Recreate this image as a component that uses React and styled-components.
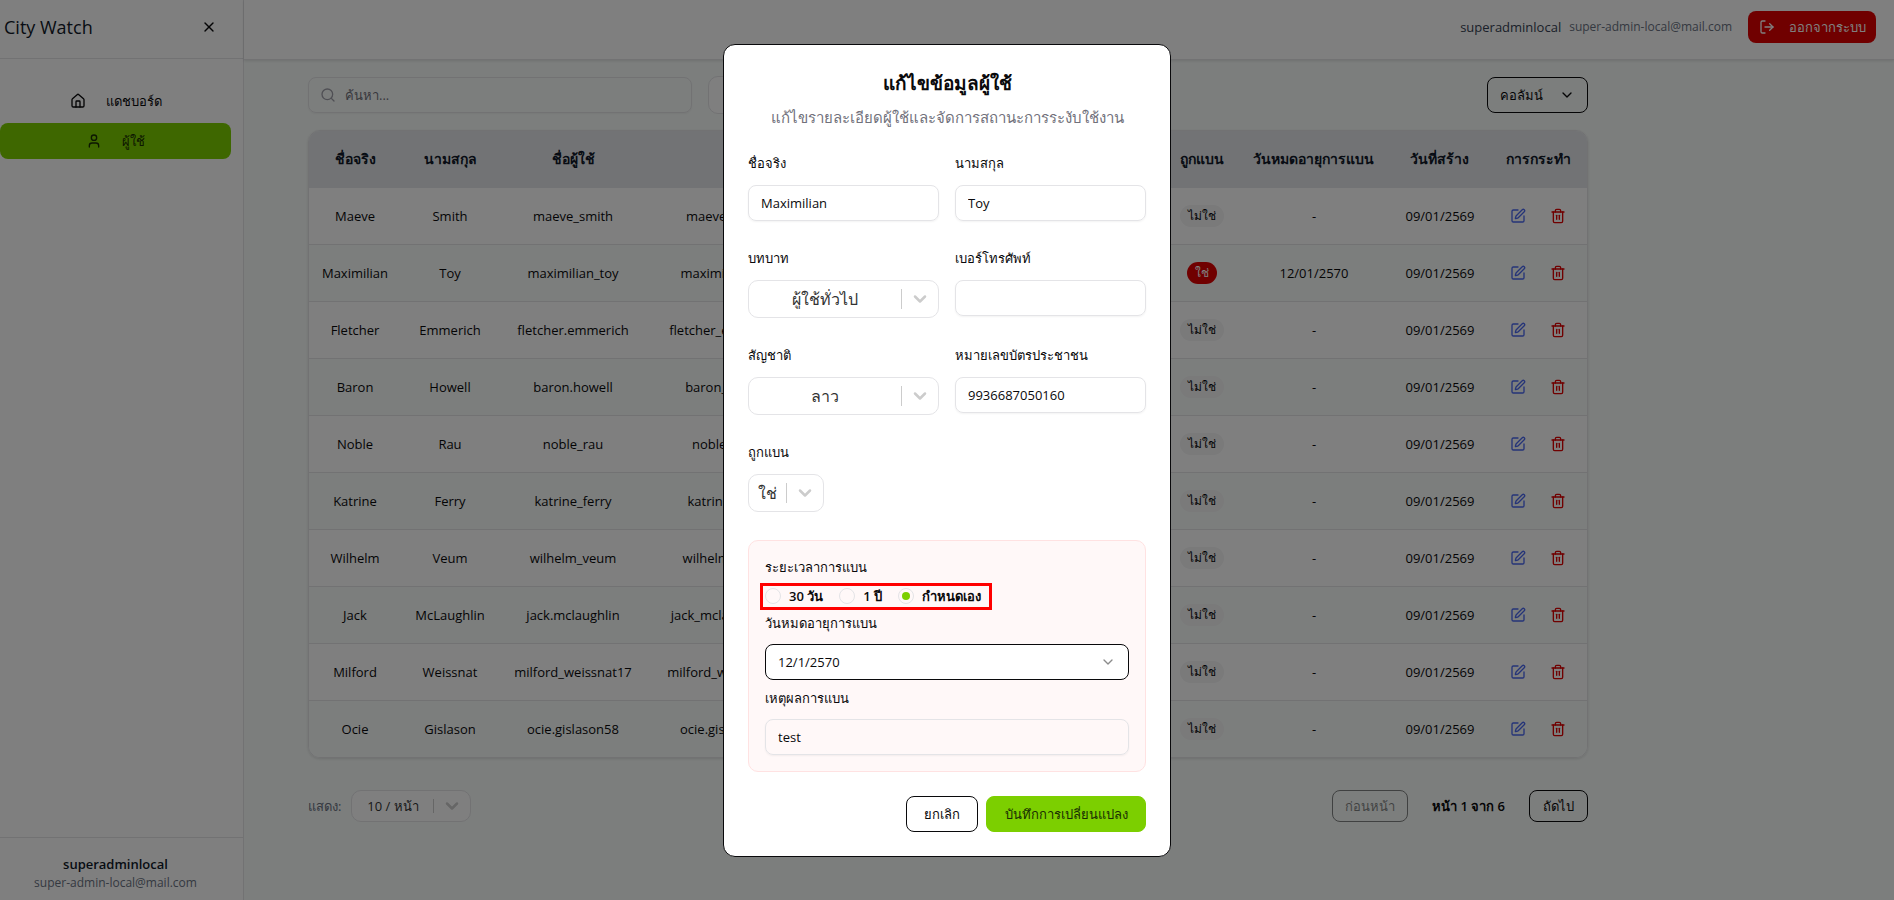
import React from "react";
import styled, { createGlobalStyle, css } from "styled-components";
import {
  ChevronDown,
  House,
  LogOut,
  Search,
  SquarePen,
  Trash2,
  User,
  X,
} from "lucide-react";

const colors = {
  primary: "#7ccf00",
  onPrimary: "#192e03",
  danger: "#e00000",
  ink: "#09090b",
  heading: "#101828",
  muted: "#71717b",
  border: "#e4e4e7",
  page: "#f9fdfb",
};

const users = [
  ["Maeve", "Smith", "maeve_smith", "maeve_smith@gmail.com"],
  ["Maximilian", "Toy", "maximilian_toy", "maximilian_toy@gmail.com", "12/01/2570"],
  ["Fletcher", "Emmerich", "fletcher.emmerich", "fletcher_emmerich@gmail.com"],
  ["Baron", "Howell", "baron.howell", "baron_howell@gmail.com"],
  ["Noble", "Rau", "noble_rau", "noble_rau1@gmail.com"],
  ["Katrine", "Ferry", "katrine_ferry", "katrine_ferry@gmail.com"],
  ["Wilhelm", "Veum", "wilhelm_veum", "wilhelm_veum@gmail.com"],
  ["Jack", "McLaughlin", "jack.mclaughlin", "jack_mclaughlin22@gmail.com"],
  ["Milford", "Weissnat", "milford_weissnat17", "milford_weissnat17@gmail.com"],
  ["Ocie", "Gislason", "ocie.gislason58", "ocie.gislason58@gmail.com"],
];

const columns = [
  { title: "ชื่อจริง", width: 92 },
  { title: "นามสกุล", width: 98 },
  { title: "ชื่อผู้ใช้", width: 148 },
  { title: "อีเมล", width: 232 },
  { title: "", width: 286 },
  { title: "ถูกแบน", width: 73 },
  { title: "วันหมดอายุการแบน", width: 152 },
  { title: "วันที่สร้าง", width: 100 },
  { title: "การกระทำ", width: 97 },
];

const GlobalStyle = createGlobalStyle`
  *, *::before, *::after {
    box-sizing: border-box;
  }

  body {
    margin: 0;
    background: ${colors.page};
    color: ${colors.ink};
    font-family: "Open Sans", "Noto Sans", sans-serif;
    font-size: 13px;
    line-height: 20px;
  }

  button, input, select {
    font: inherit;
    color: inherit;
  }
`;

const Shell = styled.div`
  display: flex;
  min-height: 100vh;
`;

const Sidebar = styled.aside`
  display: flex;
  flex-direction: column;
  flex: 0 0 244px;
  background: #fff;
  border-right: 1px solid ${colors.border};
`;

const SidebarHeader = styled.div`
  display: flex;
  align-items: center;
  justify-content: space-between;
  height: 59px;
  padding: 4px 26px 8px 4px;
  border-bottom: 1px solid ${colors.border};
`;

const Brand = styled.h1`
  margin: 0;
  font-size: 18px;
  font-weight: 500;
  line-height: 28px;
  color: ${colors.heading};
`;

const IconButton = styled.button`
  display: inline-flex;
  align-items: center;
  justify-content: center;
  width: ${(p) => p.$size || 32}px;
  height: ${(p) => p.$size || 32}px;
  padding: 0;
  border: 0;
  background: none;
  color: ${(p) => p.$color || colors.ink};
`;

const Nav = styled.nav`
  display: flex;
  flex-direction: column;
  gap: 4px;
  flex: 1;
  padding: 24px 12px 24px 0;
`;

const NavLink = styled.a`
  display: flex;
  align-items: center;
  justify-content: center;
  gap: 20px;
  height: 36px;
  border-radius: 8px;
  font-weight: 500;
  text-decoration: none;
  color: ${(p) => (p.$active ? colors.onPrimary : colors.ink)};
  background: ${(p) => (p.$active ? colors.primary : "transparent")};
`;

const SidebarFooter = styled.div`
  padding: 16px 12px 8px 0;
  border-top: 1px solid ${colors.border};
  text-align: center;
`;

const UserName = styled.div`
  font-weight: 600;
  color: ${colors.heading};
`;

const UserEmail = styled.div`
  font-size: 12px;
  line-height: 18px;
  color: #6a7282;
`;

const Main = styled.div`
  flex: 1;
  min-width: 0;
`;

const TopBar = styled.header`
  display: flex;
  align-items: center;
  justify-content: flex-end;
  height: 60px;
  padding: 0 18px 6px;
  background: #fff;
  border-bottom: 1px solid ${colors.border};
  box-shadow: 0 1px 3px rgba(0, 0, 0, 0.12);
`;

const TopBarName = styled.span`
  margin-right: 8px;
  color: #364153;
`;

const LogoutButton = styled.button`
  display: flex;
  align-items: center;
  justify-content: center;
  gap: 14px;
  height: 32px;
  min-width: 128px;
  margin-left: 16px;
  padding: 0 8px;
  border: 0;
  border-radius: 8px;
  background: ${colors.danger};
  color: #fff;
  font-weight: 500;
`;

const Content = styled.main`
  display: flex;
  flex-direction: column;
  max-width: 1408px;
  padding: 16px 64px;
`;

const Toolbar = styled.div`
  display: flex;
  align-items: center;
  gap: 16px;
  margin-bottom: 16px;
`;

const ToolbarEnd = styled.div`
  margin-left: auto;
`;

const SearchBox = styled.label`
  display: flex;
  align-items: center;
  gap: 9px;
  width: 384px;
  height: 36px;
  padding: 0 11px;
  border: 1px solid ${colors.border};
  border-radius: 8px;
  box-shadow: 0 1px 2px rgba(0, 0, 0, 0.05);
  color: #9f9fa9;
`;

const SearchInput = styled.input`
  flex: 1;
  min-width: 0;
  padding: 0;
  border: 0;
  outline: 0;
  background: none;

  &::placeholder {
    color: ${colors.muted};
  }
`;

const Button = styled.button`
  display: inline-flex;
  align-items: center;
  justify-content: center;
  gap: 16px;
  height: ${(p) => p.$height || 36}px;
  min-width: ${(p) => p.$minWidth || 0}px;
  padding: 0 8px;
  border: 1px solid ${colors.ink};
  border-radius: 8px;
  background: transparent;
  font-weight: 500;

  &:disabled {
    opacity: 0.5;
  }

  ${(p) =>
    p.$primary &&
    css`
      border-color: ${colors.primary};
      background: ${colors.primary};
      color: ${colors.onPrimary};
    `}
`;

const SelectBox = styled.div`
  display: flex;
  align-items: center;
  width: ${(p) => p.$width || "100%"};
  height: ${(p) => p.$height || 38}px;
  border: 1px solid ${colors.border};
  border-radius: 10px;
  background: #fff;
  color: #ccc;

  svg {
    flex: none;
    margin: 0 8px;
  }
`;

const NativeSelect = styled.select`
  flex: 1;
  align-self: stretch;
  min-width: 0;
  padding: 0;
  border: 0;
  border-radius: 10px;
  outline: 0;
  appearance: none;
  background: none;
  color: #333;
  font-size: ${(p) => p.$fontSize || 16}px;
  text-align: center;
  text-align-last: center;
`;

const Divider = styled.span`
  align-self: stretch;
  width: 1px;
  margin: 8px 0;
  background: #ccc;
`;

const TableCard = styled.div`
  overflow: hidden;
  border: 1px solid ${colors.border};
  border-radius: 12px;
  box-shadow: 0 1px 3px rgba(0, 0, 0, 0.12);
`;

const Table = styled.table`
  width: 100%;
  table-layout: fixed;
  border-spacing: 0;
  text-align: center;
`;

const HeadCell = styled.th`
  height: 57px;
  padding: 0 0 2px;
  background: #e5e7eb;
  color: ${colors.heading};
  font-size: 14px;
  font-weight: 700;
  white-space: nowrap;
`;

const Row = styled.tr`
  background: ${(p) => (p.$even ? colors.page : "#fff")};

  &:not(:last-child) td {
    border-bottom: 1px solid ${colors.border};
    height: 57px;
  }
`;

const Cell = styled.td`
  height: 56px;
  padding: 0;
  white-space: nowrap;
`;

const Badge = styled.span`
  display: inline-block;
  padding: 0 8px;
  border-radius: 12px;
  font-size: 12px;
  line-height: 22px;
  background: ${(p) => (p.$banned ? colors.danger : "#f4f4f5")};
  color: ${(p) => (p.$banned ? "#fff" : colors.ink)};
`;

const Actions = styled.div`
  display: flex;
  justify-content: center;
  gap: 8px;
`;

const Pagination = styled.div`
  display: flex;
  align-items: center;
  justify-content: space-between;
  margin-top: 32px;
`;

const PageSize = styled.label`
  display: flex;
  align-items: center;
  gap: 10px;
  color: #6a7282;
  white-space: nowrap;
`;

const Pager = styled.div`
  display: flex;
  align-items: center;
  gap: 24px;
  font-weight: 600;
`;

const Overlay = styled.div`
  position: fixed;
  inset: 0;
  display: grid;
  place-items: center;
  background: rgba(0, 0, 0, 0.5);
`;

const Dialog = styled.form`
  width: 448px;
  max-width: 100%;
  padding: 24px;
  border: 1px solid ${colors.ink};
  border-radius: 12px;
  background: #fff;
`;

const DialogTitle = styled.h2`
  margin: 0;
  font-size: 19px;
  font-weight: 600;
  line-height: 28px;
  text-align: center;
`;

const DialogHint = styled.p`
  margin: 8px 0 24px;
  font-size: 15px;
  line-height: 24px;
  text-align: center;
  color: ${colors.muted};
`;

const FieldGrid = styled.div`
  display: grid;
  grid-template-columns: 1fr 1fr;
  gap: 27px 16px;
`;

const Field = styled.div`
  display: flex;
  flex-direction: column;
  gap: ${(p) => (p.$compact ? 11 : 12)}px;
`;

const Label = styled.label`
  font-weight: 500;
  line-height: 20px;
`;

const TextInput = styled.input`
  width: 100%;
  height: 36px;
  padding: 0 12px;
  border: 1px solid ${colors.border};
  border-radius: 8px;
  outline: 0;
  background: transparent;
  box-shadow: 0 1px 2px rgba(0, 0, 0, 0.05);
`;

const BanPanel = styled.div`
  display: flex;
  flex-direction: column;
  gap: 8px;
  margin: 28px 0 24px;
  padding: 16px;
  border: 1px solid #ffe2e2;
  border-radius: 10px;
  background: #fff8f8;
`;

const RadioGroup = styled.div`
  display: flex;
  align-self: flex-start;
  gap: 16px;
  padding-right: 6px;
  outline: 3px solid #f00;
  outline-offset: 2px;
`;

const RadioLabel = styled.label`
  display: flex;
  align-items: center;
  gap: 8px;
  font-weight: 600;
  line-height: 17px;
`;

const Radio = styled.input`
  display: grid;
  place-items: center;
  width: 16px;
  height: 16px;
  margin: 0;
  border: 1px solid ${colors.border};
  border-radius: 50%;
  appearance: none;

  &:checked::before {
    width: 8px;
    height: 8px;
    border-radius: 50%;
    background: ${colors.primary};
    content: "";
  }
`;

const DateButton = styled.button`
  display: flex;
  align-items: center;
  justify-content: space-between;
  height: 36px;
  padding: 0 12px;
  border: 1px solid ${colors.ink};
  border-radius: 8px;
  background: #fff;

  svg {
    color: #8b8b8b;
  }
`;

const DialogActions = styled.div`
  display: flex;
  justify-content: flex-end;
  gap: 8px;
`;

const Select = ({ id, value, width, height, fontSize }) => (
  <SelectBox $width={width} $height={height}>
    <NativeSelect id={id} $fontSize={fontSize} aria-label={value}>
      <option>{value}</option>
    </NativeSelect>
    <Divider />
    <ChevronDown size={20} strokeWidth={3} />
  </SelectBox>
);

const TextField = ({ id, label, value, compact }) => (
  <Field $compact={compact}>
    <Label htmlFor={id}>{label}</Label>
    <TextInput id={id} defaultValue={value} />
  </Field>
);

const SelectField = ({ id, label, value, width }) => (
  <Field>
    <Label htmlFor={id}>{label}</Label>
    <Select id={id} value={value} width={width} />
  </Field>
);

const UserTable = () => (
  <TableCard>
    <Table>
      <colgroup>
        {columns.map((column, i) => (
          <col key={i} style={{ width: `${(column.width / 1278) * 100}%` }} />
        ))}
      </colgroup>
      <thead>
        <tr>
          {columns.map((column, i) => (
            <HeadCell key={i}>{column.title}</HeadCell>
          ))}
        </tr>
      </thead>
      <tbody>
        {users.map(([first, last, username, email, banUntil], i) => (
          <Row key={username} $even={i % 2 === 1}>
            <Cell>{first}</Cell>
            <Cell>{last}</Cell>
            <Cell>{username}</Cell>
            <Cell>{email}</Cell>
            <Cell />
            <Cell>
              <Badge $banned={!!banUntil}>{banUntil ? "ใช่" : "ไม่ใช่"}</Badge>
            </Cell>
            <Cell>{banUntil || "-"}</Cell>
            <Cell>09/01/2569</Cell>
            <Cell>
              <Actions>
                <IconButton $color="#4a68f0" aria-label="แก้ไข">
                  <SquarePen size={16} />
                </IconButton>
                <IconButton $color={colors.danger} aria-label="ลบ">
                  <Trash2 size={16} />
                </IconButton>
              </Actions>
            </Cell>
          </Row>
        ))}
      </tbody>
    </Table>
  </TableCard>
);

const EditUserDialog = () => (
  <Overlay>
    <Dialog role="dialog" aria-labelledby="dialog-title">
      <DialogTitle id="dialog-title">แก้ไขข้อมูลผู้ใช้</DialogTitle>
      <DialogHint>แก้ไขรายละเอียดผู้ใช้และจัดการสถานะการระงับใช้งาน</DialogHint>
      <FieldGrid>
        <TextField id="first-name" label="ชื่อจริง" value="Maximilian" />
        <TextField id="last-name" label="นามสกุล" value="Toy" />
        <SelectField id="role" label="บทบาท" value="ผู้ใช้ทั่วไป" />
        <TextField id="phone" label="เบอร์โทรศัพท์" value="" />
        <SelectField id="nationality" label="สัญชาติ" value="ลาว" />
        <TextField id="citizen-id" label="หมายเลขบัตรประชาชน" value="9936687050160" />
        <SelectField id="banned" label="ถูกแบน" value="ใช่" width="76px" />
      </FieldGrid>
      <BanPanel>
        <Field $compact>
          <Label as="span" id="ban-length">
            ระยะเวลาการแบน
          </Label>
          <RadioGroup role="radiogroup" aria-labelledby="ban-length">
            <RadioLabel>
              <Radio type="radio" name="ban" />
              30 วัน
            </RadioLabel>
            <RadioLabel>
              <Radio type="radio" name="ban" />1 ปี
            </RadioLabel>
            <RadioLabel>
              <Radio type="radio" name="ban" defaultChecked />
              กำหนดเอง
            </RadioLabel>
          </RadioGroup>
        </Field>
        <Field $compact>
          <Label htmlFor="ban-until">วันหมดอายุการแบน</Label>
          <DateButton id="ban-until" type="button">
            12/1/2570
            <ChevronDown size={16} />
          </DateButton>
        </Field>
        <TextField id="ban-reason" label="เหตุผลการแบน" value="test" compact />
      </BanPanel>
      <DialogActions>
        <Button type="button" $minWidth={72}>
          ยกเลิก
        </Button>
        <Button type="button" $primary $minWidth={160}>
          บันทึกการเปลี่ยนแปลง
        </Button>
      </DialogActions>
    </Dialog>
  </Overlay>
);

const App = () => (
  <>
    <GlobalStyle />
    <Shell>
      <Sidebar>
        <SidebarHeader>
          <Brand>City Watch</Brand>
          <IconButton $size={16} aria-label="ปิด">
            <X size={16} />
          </IconButton>
        </SidebarHeader>
        <Nav>
          <NavLink href="#dashboard">
            <House size={16} />
            แดชบอร์ด
          </NavLink>
          <NavLink href="#users" $active>
            <User size={16} />
            ผู้ใช้
          </NavLink>
        </Nav>
        <SidebarFooter>
          <UserName>superadminlocal</UserName>
          <UserEmail>super-admin-local@mail.com</UserEmail>
        </SidebarFooter>
      </Sidebar>
      <Main>
        <TopBar>
          <TopBarName>superadminlocal</TopBarName>
          <UserEmail>super-admin-local@mail.com</UserEmail>
          <LogoutButton>
            <LogOut size={16} />
            ออกจากระบบ
          </LogoutButton>
        </TopBar>
        <Content>
          <Toolbar>
            <SearchBox>
              <Search size={16} />
              <SearchInput placeholder="ค้นหา..." />
            </SearchBox>
            <Select value="ทั้งหมด" width="160px" />
            <ToolbarEnd>
              <Button $minWidth={101}>
                คอลัมน์
                <ChevronDown size={16} />
              </Button>
            </ToolbarEnd>
          </Toolbar>
          <UserTable />
          <Pagination>
            <PageSize>
              แสดง:
              <Select value="10 / หน้า" width="120px" height={32} fontSize={13} />
            </PageSize>
            <Pager>
              <Button $height={32} $minWidth={76} disabled>
                ก่อนหน้า
              </Button>
              หน้า 1 จาก 6
              <Button $height={32} $minWidth={59}>
                ถัดไป
              </Button>
            </Pager>
          </Pagination>
        </Content>
      </Main>
    </Shell>
    <EditUserDialog />
  </>
);

export default App;
